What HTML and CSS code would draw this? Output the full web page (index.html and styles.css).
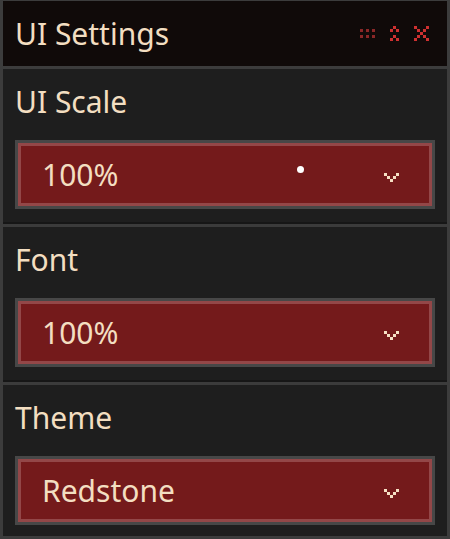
FILE: index.html
```html
<!DOCTYPE html>
<html>
<head>
<meta charset="utf-8">
<title>UI Settings</title>
<link rel="stylesheet" href="styles.css">
</head>
<body>
<div class="window">
  <div class="titlebar">
    <div class="title">UI Settings</div>
    <div class="controls">
      <svg class="ico" width="15" height="9" viewBox="0 0 15 9" shape-rendering="crispEdges">
        <g fill="#8a2727">
          <rect x="0" y="0" width="3" height="3"/><rect x="6" y="0" width="3" height="3"/><rect x="12" y="0" width="3" height="3"/>
          <rect x="0" y="6" width="3" height="3"/><rect x="6" y="6" width="3" height="3"/><rect x="12" y="6" width="3" height="3"/>
        </g>
      </svg>
      <svg class="ico" width="9" height="15" viewBox="0 0 9 15" shape-rendering="crispEdges">
        <g fill="#cf3030">
          <rect x="3" y="0" width="3" height="3"/><rect x="0" y="3" width="3" height="3"/><rect x="6" y="3" width="3" height="3"/>
          <rect x="3" y="9" width="3" height="3"/><rect x="0" y="12" width="3" height="3"/><rect x="6" y="12" width="3" height="3"/>
        </g>
      </svg>
      <svg class="ico" width="15" height="15" viewBox="0 0 15 15" shape-rendering="crispEdges">
        <g fill="#cf3030">
          <rect x="0" y="0" width="3" height="3"/><rect x="12" y="0" width="3" height="3"/>
          <rect x="3" y="3" width="3" height="3"/><rect x="9" y="3" width="3" height="3"/>
          <rect x="6" y="6" width="3" height="3"/>
          <rect x="3" y="9" width="3" height="3"/><rect x="9" y="9" width="3" height="3"/>
          <rect x="0" y="12" width="3" height="3"/><rect x="12" y="12" width="3" height="3"/>
        </g>
      </svg>
    </div>
  </div>

  <div class="section">
    <div class="label">UI Scale</div>
    <div class="dropdown">
      <span class="value">100%</span>
      <svg class="chev" width="15" height="9" viewBox="0 0 15 9" shape-rendering="crispEdges">
        <g fill="#f6e0c4">
          <rect x="0" y="0" width="3" height="3"/><rect x="12" y="0" width="3" height="3"/>
          <rect x="3" y="3" width="3" height="3"/><rect x="9" y="3" width="3" height="3"/>
          <rect x="6" y="6" width="3" height="3"/>
        </g>
      </svg>
      <span class="cursor"></span>
    </div>
  </div>

  <div class="section">
    <div class="label">Font</div>
    <div class="dropdown">
      <span class="value">100%</span>
      <svg class="chev" width="15" height="9" viewBox="0 0 15 9" shape-rendering="crispEdges">
        <g fill="#f6e0c4">
          <rect x="0" y="0" width="3" height="3"/><rect x="12" y="0" width="3" height="3"/>
          <rect x="3" y="3" width="3" height="3"/><rect x="9" y="3" width="3" height="3"/>
          <rect x="6" y="6" width="3" height="3"/>
        </g>
      </svg>
    </div>
  </div>

  <div class="section last">
    <div class="label">Theme</div>
    <div class="dropdown">
      <span class="value">Redstone</span>
      <svg class="chev" width="15" height="9" viewBox="0 0 15 9" shape-rendering="crispEdges">
        <g fill="#f6e0c4">
          <rect x="0" y="0" width="3" height="3"/><rect x="12" y="0" width="3" height="3"/>
          <rect x="3" y="3" width="3" height="3"/><rect x="9" y="3" width="3" height="3"/>
          <rect x="6" y="6" width="3" height="3"/>
        </g>
      </svg>
    </div>
  </div>
</div>
</body>
</html>
```

FILE: styles.css
```css
html, body {
  margin: 0;
  padding: 0;
  background: #1e1e1e;
}

body {
  font-family: "Noto Sans", "Open Sans", sans-serif;
  color: #f3dec1;
}

.window {
  width: 450px;
  height: 539px;
  box-sizing: border-box;
  border-left: 3px solid #3c3c3c;
  border-right: 3px solid #3c3c3c;
  border-top: 1px solid #3c3c3c;
  border-bottom: 3px solid #3c3c3c;
  overflow: hidden;
  display: flex;
  flex-direction: column;
}

.titlebar {
  height: 68px;
  box-sizing: border-box;
  background: #100a09;
  border-bottom: 3px solid #3c3c3c;
  display: flex;
  align-items: center;
  justify-content: space-between;
  padding: 0 18px 0 12px;
  flex: none;
}

.title {
  font-size: 30px;
  line-height: 41px;
}

.controls {
  display: flex;
  align-items: center;
  gap: 15px;
}

.ico {
  display: block;
}

.section {
  background: #1e1e1e;
  padding: 12px 12px 12px 12px;
  height: 155px;
  box-sizing: border-box;
  border-bottom: 2px solid #161616;
  box-shadow: 0 3px 0 #3b3b3b;
  margin-bottom: 3px;
  display: flex;
  flex-direction: column;
  flex: none;
}

.section.last {
  border-bottom: none;
  box-shadow: none;
  margin-bottom: 0;
}

.label {
  font-size: 30px;
  line-height: 41px;
  height: 41px;
}

.dropdown {
  position: relative;
  margin-top: 18px;
  height: 69px;
  box-sizing: border-box;
  background: #741a1b;
  border: 3px solid #474747;
  box-shadow: inset 0 0 0 3px #934748;
  display: flex;
  align-items: center;
  justify-content: space-between;
  padding: 0 33px 0 24px;
}

.value {
  font-size: 30px;
  line-height: 41px;
}

.chev {
  display: block;
  margin-top: 5px;
}

.cursor {
  position: absolute;
  left: 279px;
  top: 23px;
  width: 7px;
  height: 7px;
  border-radius: 50%;
  background: #ffffff;
}
```
